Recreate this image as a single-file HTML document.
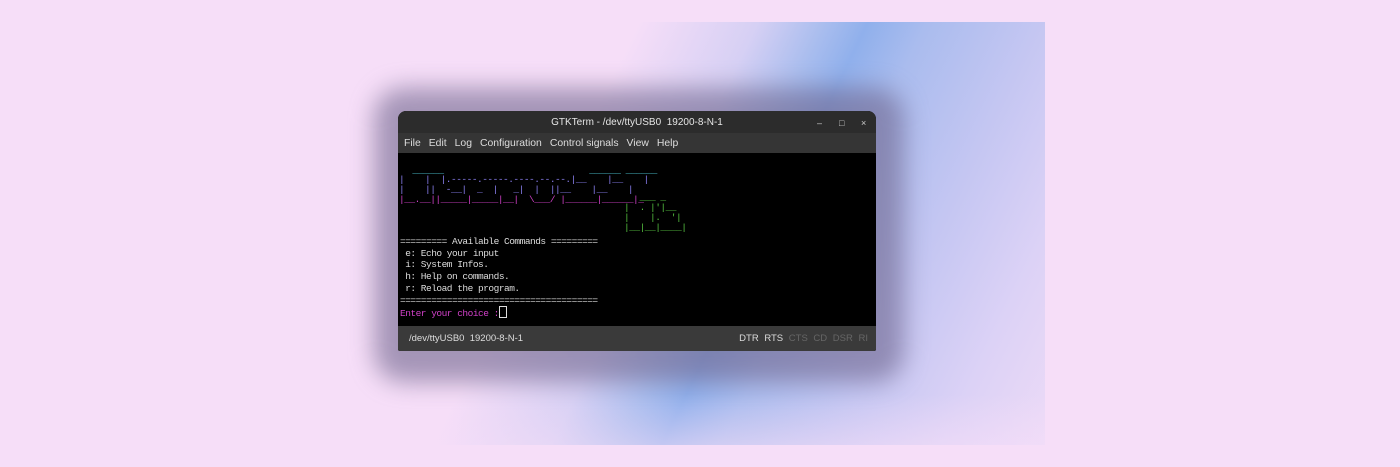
<!DOCTYPE html>
<html><head><meta charset="utf-8"><style>
html,body{margin:0;padding:0}
body{width:1400px;height:467px;background:#f6def8;position:relative;overflow:hidden;font-family:"Liberation Sans",sans-serif}
.blob{position:absolute;left:400px;top:22px;width:645px;height:423px;
background:linear-gradient(116deg,rgba(246,222,248,0) 28%,#d6d0f4 42%,#a9bdee 50%,#90b0ec 55%,#aabcee 62%,#c4c6f2 75%,#dcd2f6 88%,#ecdaf7 100%);}
.blob2{position:absolute;left:400px;top:22px;width:645px;height:423px;
background:linear-gradient(90deg,#f6def8 0%,rgba(246,222,248,0) 10%),linear-gradient(0deg,rgba(246,222,248,0.5) 0%,rgba(246,222,248,0) 12%)}
.shadow{position:absolute;left:374px;top:88px;width:530px;height:294px;border-radius:30px;background:rgba(110,100,140,0.6);filter:blur(12px)}
.win{position:absolute;left:398px;top:111px;width:478px;height:240px;background:#000;border-radius:8px 8px 2px 2px;overflow:hidden}
.title{height:22px;background:#2c2c2c;color:#e6e6e6;font-size:10px;text-align:center;line-height:24px;position:relative}
.ctl{position:absolute;top:0;font-size:9px;color:#ccc;font-weight:normal}
.menu{height:20px;background:#353535;color:#ddd;font-size:10.4px;line-height:21px;padding-left:6px}
.menu span{margin-right:8px}
.term{height:173px;background:#000;position:relative;font-family:"Liberation Mono",monospace;font-size:9.5px;letter-spacing:-0.5px;line-height:11.7px;color:#ddd}
.term pre{margin:0;position:absolute;font:inherit;white-space:pre}
.status{height:25px;background:#3a3a3a;color:#ddd;font-size:9.5px;line-height:25px;padding-left:11px;position:relative}
.sig{position:absolute;right:8px;top:0;word-spacing:3px}
</style></head><body>
<div class="blob"></div><div class="blob2"></div>
<div class="shadow"></div>
<div class="win">
 <div class="title">GTKTerm - /dev/ttyUSB0&nbsp; 19200-8-N-1
  <span class="ctl" style="left:419px">–</span><span class="ctl" style="left:441px">□</span><span class="ctl" style="left:463px">×</span></div>
 <div class="menu"><span>File</span><span>Edit</span><span>Log</span><span>Configuration</span><span>Control signals</span><span>View</span><span>Help</span></div>
 <div class="term">
<pre style="left:4px;top:14px;color:#4cc7d6;line-height:8px">  ______                            ______ ______</pre>
<pre style="left:1px;top:22px;color:#8a7ff0;line-height:10px">|    |  |.-----.-----.----.--.--.|__    |__    |
|    ||  -__|  _  |   _|  |  ||__    |__    |</pre>
<pre style="left:1px;top:42px;color:#d040c8;line-height:10px">|__.__||_____|_____|__|  \___/ |______|______|_</pre>
<pre style="left:226px;top:40px;color:#55c040;line-height:10px">   ___ _
|  . |'|__
|    |.  '|
|__|__|____|</pre>
<pre style="left:2px;top:83px">========= Available Commands =========
 e: Echo your input
 i: System Infos.
 h: Help on commands.
 r: Reload the program.
======================================</pre>
<pre style="left:2px;top:153px;color:#d040c8">Enter your choice :<span style="display:inline-block;width:6px;height:10px;border:1px solid #ddd;vertical-align:-2px"></span></pre>
 </div>
 <div class="status">/dev/ttyUSB0&nbsp; 19200-8-N-1<span class="sig">DTR RTS <span style="color:#666">CTS CD DSR RI</span></span></div>
</div>
</body></html>
